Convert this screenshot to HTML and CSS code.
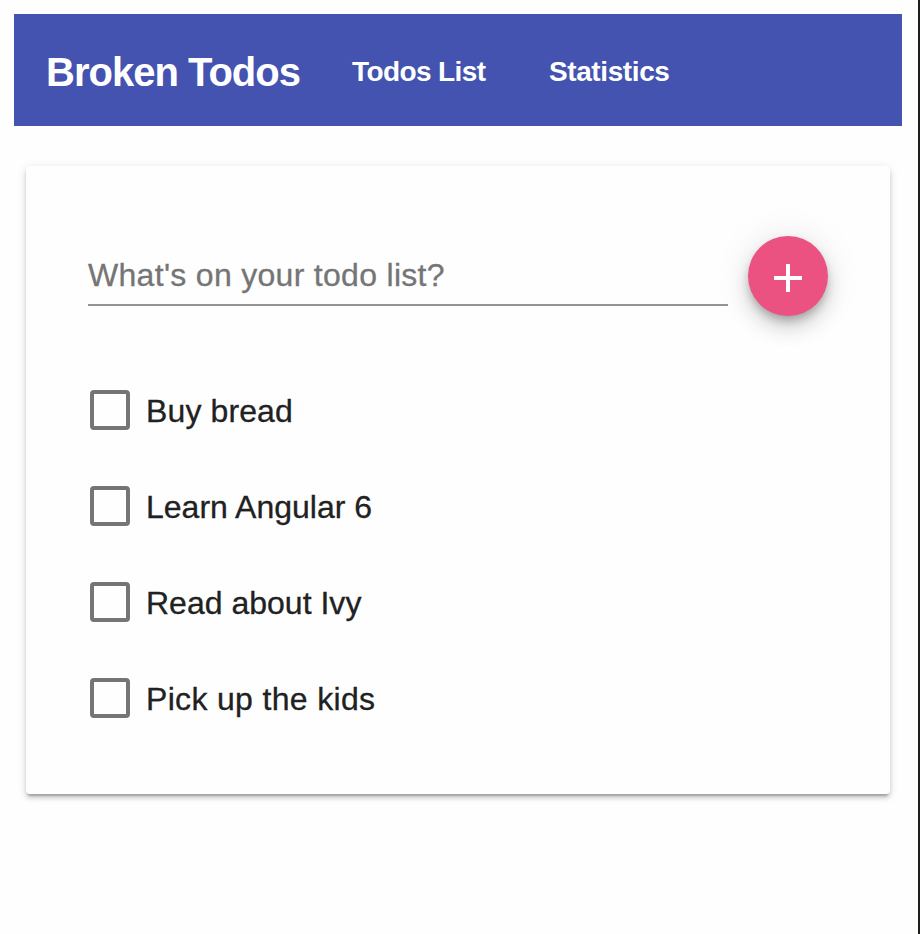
FILE: index.html
```html
<!DOCTYPE html>
<html lang="en">
<head>
<meta charset="utf-8">
<title>Broken Todos</title>
<link rel="stylesheet" href="styles.css">
</head>
<body>
<div class="page">
  <header class="toolbar">
    <h1 class="brand">Broken Todos</h1>
    <nav class="nav">
      <a class="nav-list">Todos List</a>
      <a class="nav-stats">Statistics</a>
    </nav>
  </header>
  <main class="card">
    <form class="add-form">
      <div class="field"><span class="placeholder">What's on your todo list?</span></div>
      <button class="fab" type="button" aria-label="Add">
        <svg width="28" height="28" viewBox="0 0 28 28"><path d="M12 0h4v12h12v4H16v12h-4V16H0v-4h12z" fill="#fff"/></svg>
      </button>
    </form>
    <ul class="todos">
      <li class="todo"><span class="box"></span><span class="label buy">Buy bread</span></li>
      <li class="todo"><span class="box"></span><span class="label learn">Learn Angular 6</span></li>
      <li class="todo"><span class="box"></span><span class="label read">Read about Ivy</span></li>
      <li class="todo"><span class="box"></span><span class="label pick">Pick up the kids</span></li>
    </ul>
  </main>
</div>
</body>
</html>
```
FILE: styles.css
```css
* { box-sizing: border-box; }
html, body { margin: 0; height: 934px; overflow: hidden; }
body {
  background: #fefefe;
  font-family: "Liberation Sans", Arial, sans-serif;
  color: #212121;
}
.page {
  height: 934px;
  padding: 14px 16px 0 14px;
  border-right: 2px solid #1e1e1c;
}
.toolbar {
  display: flex;
  align-items: center;
  height: 112px;
  padding: 4px 32px 0;
  background: #4353af;
  color: #fff;
}
.brand {
  margin: 0;
  width: 306px;
  font-size: 40px;
  font-weight: 700;
  letter-spacing: -1px;
  white-space: nowrap;
}
.nav {
  display: flex;
  font-size: 28px;
  font-weight: 700;
  white-space: nowrap;
}
.nav-list { width: 197px; letter-spacing: -0.6px; }
.nav-stats { letter-spacing: -0.4px; }
.card {
  width: 864px;
  height: 628px;
  margin: 40px 0 0 12px;
  padding: 70px 62px 0;
  border-radius: 4px;
  background: #fefefe;
  box-shadow: 0 4px 2px -2px rgba(0,0,0,.2), 0 4px 4px 0 rgba(0,0,0,.14), 0 2px 10px 0 rgba(0,0,0,.12);
}
.add-form { display: flex; gap: 20px; height: 80px; }
.field {
  width: 640px;
  height: 70px;
  padding-top: 20px;
  border-bottom: 2px solid #949494;
  font-size: 32px;
  line-height: 38px;
  color: #757575;
}
.placeholder { letter-spacing: 0.3px; -webkit-text-stroke: 0.3px #757575; }
.fab {
  display: flex;
  align-items: center;
  justify-content: center;
  width: 80px;
  height: 80px;
  padding: 4px 0 0;
  border: 0;
  border-radius: 50%;
  background: #eb5281;
  box-shadow: 0 6px 10px -2px rgba(0,0,0,.26), 0 12px 20px 0 rgba(0,0,0,.14), 0 2px 36px 0 rgba(0,0,0,.1);
}
.todos { margin: 46px 0 0; padding: 0; list-style: none; }
.todo { display: flex; align-items: center; gap: 16px; height: 96px; padding-left: 2px; }
.box { width: 40px; height: 40px; border: 4px solid #757575; border-radius: 4px; }
.label { font-size: 32px; line-height: 38px; padding-top: 2px; -webkit-text-stroke: 0.3px #212121; }
.buy { letter-spacing: 0.12px; }
.learn, .read { letter-spacing: 0.01px; }
.pick { letter-spacing: 0.33px; }
```
